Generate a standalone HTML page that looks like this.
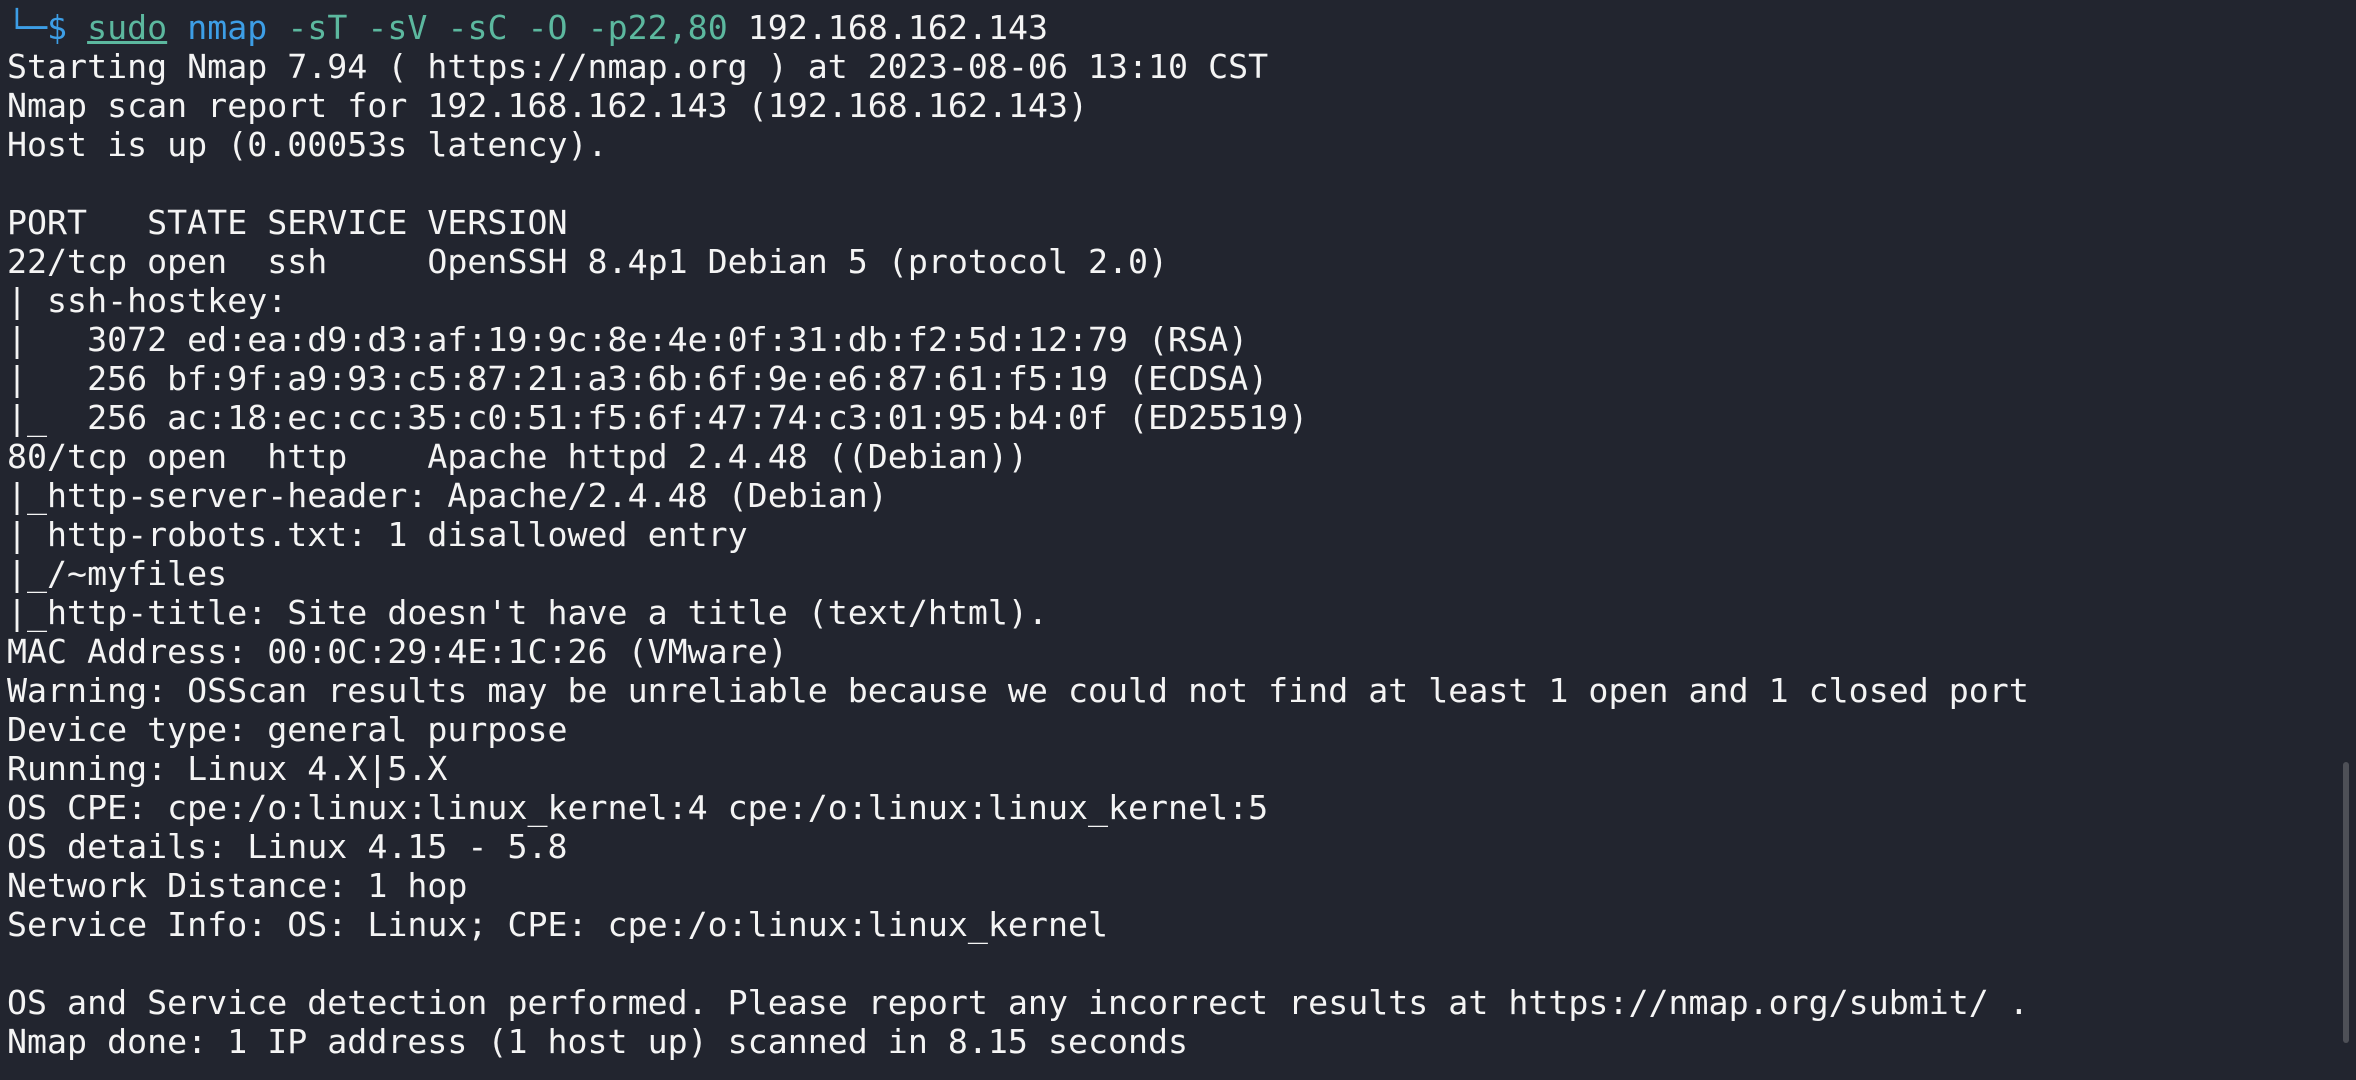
<!DOCTYPE html>
<html><head><meta charset="utf-8"><style>
html,body{margin:0;padding:0;width:2356px;height:1080px;overflow:hidden;background:#22252f;}
pre{margin:0;position:absolute;left:7px;top:8px;font-family:"DejaVu Sans Mono","Liberation Mono",monospace;font-size:33.25px;line-height:39px;color:#f4f4f4;white-space:pre;}
.b{color:#3d9ee6}.t{color:#5cb89f}.u{text-decoration:underline;color:#5cb89f}
.sb{position:absolute;left:2343px;top:762px;width:6px;height:281px;border-radius:3px;background:#4e5057;}
</style></head><body>
<pre><span class="b">└─$</span> <span class="u">sudo</span> <span class="b">nmap</span> <span class="t">-sT -sV -sC -O -p22,80</span> 192.168.162.143
Starting Nmap 7.94 ( https://nmap.org ) at 2023-08-06 13:10 CST
Nmap scan report for 192.168.162.143 (192.168.162.143)
Host is up (0.00053s latency).

PORT   STATE SERVICE VERSION
22/tcp open  ssh     OpenSSH 8.4p1 Debian 5 (protocol 2.0)
| ssh-hostkey: 
|   3072 ed:ea:d9:d3:af:19:9c:8e:4e:0f:31:db:f2:5d:12:79 (RSA)
|   256 bf:9f:a9:93:c5:87:21:a3:6b:6f:9e:e6:87:61:f5:19 (ECDSA)
|_  256 ac:18:ec:cc:35:c0:51:f5:6f:47:74:c3:01:95:b4:0f (ED25519)
80/tcp open  http    Apache httpd 2.4.48 ((Debian))
|_http-server-header: Apache/2.4.48 (Debian)
| http-robots.txt: 1 disallowed entry 
|_/~myfiles
|_http-title: Site doesn't have a title (text/html).
MAC Address: 00:0C:29:4E:1C:26 (VMware)
Warning: OSScan results may be unreliable because we could not find at least 1 open and 1 closed port
Device type: general purpose
Running: Linux 4.X|5.X
OS CPE: cpe:/o:linux:linux_kernel:4 cpe:/o:linux:linux_kernel:5
OS details: Linux 4.15 - 5.8
Network Distance: 1 hop
Service Info: OS: Linux; CPE: cpe:/o:linux:linux_kernel

OS and Service detection performed. Please report any incorrect results at https://nmap.org/submit/ .
Nmap done: 1 IP address (1 host up) scanned in 8.15 seconds</pre>
<div class="sb"></div>
</body></html>
